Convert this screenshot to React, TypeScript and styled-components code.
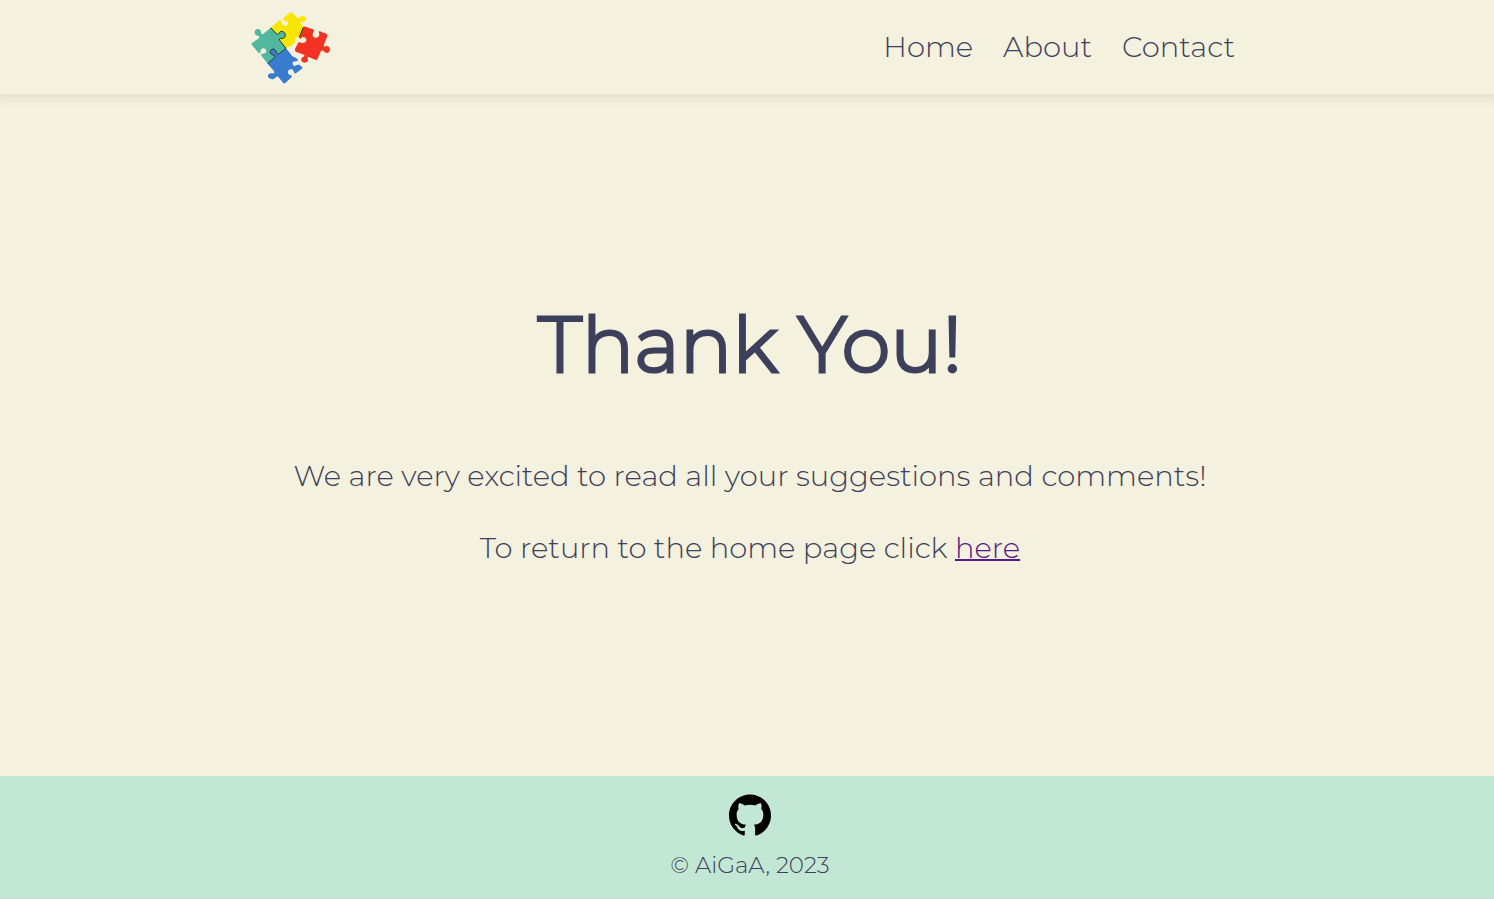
import React from "react";
import styled, { createGlobalStyle } from "styled-components";
import { SiGithub } from "react-icons/si";

const GlobalStyle = createGlobalStyle`
  * { box-sizing: border-box; }
  body {
    margin: 0;
    background: #f4f1de;
    color: #3d405b;
    font-family: Montserrat, Inter, sans-serif;
    font-weight: 300;
  }
`;

const Page = styled.div`
  min-height: 100vh;
  display: flex;
  flex-direction: column;
`;

const Header = styled.header`
  display: flex;
  align-items: center;
  justify-content: space-between;
  height: 94px;
  padding: 0 259px 0 245px;
  box-shadow: 0 0 10px 4px rgba(0, 0, 0, 0.08);
`;

const LogoLink = styled.a`
  display: block;
  height: 85px;
`;

const Nav = styled.nav`
  display: flex;
  gap: 30px;
`;

const NavLink = styled.a`
  color: inherit;
  font-size: 29px;
  line-height: 40px;
  text-decoration: none;
`;

const Main = styled.main`
  flex: 1;
  display: flex;
  flex-direction: column;
  align-items: center;
  justify-content: center;
  padding: 0 0 10px 6px;
  text-align: center;
`;

const Title = styled.h1`
  margin: 0 0 64px;
  font-size: 78px;
  font-weight: 300;
  line-height: 100px;
  -webkit-text-stroke: 3px currentColor;
`;

const Message = styled.p`
  margin: 0 0 36px;
  font-size: 29px;
  line-height: 36px;

  &:last-child { margin-bottom: 0; }
`;

const HomeLink = styled.a`
  color: #551a8b;
  text-decoration-thickness: 2px;
`;

const Footer = styled.footer`
  display: flex;
  flex-direction: column;
  align-items: center;
  gap: 15px;
  padding: 18px 0 19px 6px;
  background: #c2e7d4;
  border-bottom: 1px solid #cdd8d2;
`;

const GithubLink = styled.a`
  display: block;
  height: 42px;
  color: #000;
`;

const Copyright = styled.p`
  margin: 0;
  font-size: 23px;
  line-height: 28px;
`;

const Logo = () => (
  <svg width="92" height="85" viewBox="0 0 276 255" aria-hidden="true">
    <path
      fill="#f8e500"
      d="M78 68 L103 46 C108 43 109 48 110 52 C112 64 126 65 129 57 C131 51 127 47 121 48 C114 47 112 42 116 38 L133 24 Q138 20 143 24 L157 38 C162 42 164 40 164 37 C168 31 179 32 183 39 C186 46 179 52 172 50 C165 49 166 54 170 59 L176 67 L166 92 C163 99 160 97 156 96 C149 99 147 105 152 111 C146 116 137 125 122 130 Z"
    />
    <path
      fill="#f23222"
      d="M175 67 Q178 63 184 66 L204 73 C209 75 207 80 204 84 C201 91 205 98 212 98 C220 99 225 92 222 85 C220 79 223 78 228 80 L244 86 Q249 88 247 94 L237 118 C235 124 238 127 242 124 C248 121 256 127 255 135 C253 144 244 146 239 141 C234 135 229 135 227 140 L218 161 Q216 166 210 164 L193 157 C187 154 186 158 189 163 C190 171 182 175 174 172 C167 168 167 159 174 156 C181 153 180 150 173 148 L154 141 Q148 138 150 132 L158 116 C161 110 164 111 169 113 C176 116 185 111 184 104 C183 96 174 93 169 99 C165 104 161 101 164 95 Z"
    />
    <path
      fill="#52b79f"
      d="M77 68 L92 84 C98 91 101 87 103 83 C108 76 120 80 121 89 C122 97 114 103 107 100 C103 100 101 103 106 109 L123 130 L106 143 C100 148 96 149 94 142 C93 132 81 129 77 136 C73 143 79 149 85 150 C91 151 91 155 86 160 L68 176 L50 153 C46 149 51 145 56 146 C64 145 66 137 61 132 C55 127 46 131 47 139 C46 145 43 147 39 142 L21 120 Q18 116 22 113 L40 101 C46 97 43 93 38 92 C30 91 26 83 31 76 C38 68 48 73 48 82 C48 88 52 91 58 84 Z"
    />
    <path
      fill="#397cce"
      d="M123 130 L142 153 C147 159 143 165 145 169 C141 175 143 183 150 183 C155 181 158 177 162 179 L171 185 Q175 188 170 192 L154 204 C149 208 147 204 146 199 C144 191 131 191 129 200 C128 207 133 210 138 211 C143 212 141 216 137 219 L121 234 Q117 237 114 233 L101 217 C97 212 93 215 91 219 C84 225 74 223 69 215 C67 207 75 203 82 205 C89 206 90 201 86 197 L68 176 L86 160 C91 155 91 151 85 150 C79 149 73 143 77 136 C81 129 93 132 94 142 C96 149 100 148 106 143 Z M142 153 C147 158 156 157 159 165 C158 170 150 168 145 171 Z"
    />
    <path
      fill="none"
      stroke="#17332d"
      strokeWidth="3"
      d="M77 68 L92 84 C98 91 101 87 103 83 C108 76 120 80 121 89 C122 97 114 103 107 100 C103 100 101 103 106 109 L123 130 L106 143 C100 148 96 149 94 142 C93 132 81 129 77 136 C73 143 79 149 85 150 C91 151 91 155 86 160 L68 176 M175 67 L163 96"
    />
  </svg>
);

export default function App() {
  return (
    <Page>
      <GlobalStyle />
      <Header>
        <LogoLink href="#" aria-label="AiGaA home">
          <Logo />
        </LogoLink>
        <Nav>
          <NavLink href="#">Home</NavLink>
          <NavLink href="#about">About</NavLink>
          <NavLink href="#contact">Contact</NavLink>
        </Nav>
      </Header>
      <Main>
        <Title>Thank You!</Title>
        <Message>We are very excited to read all your suggestions and comments!</Message>
        <Message>
          To return to the home page click <HomeLink href="#">here</HomeLink>
        </Message>
      </Main>
      <Footer>
        <GithubLink href="#github" aria-label="GitHub">
          <SiGithub size={42} />
        </GithubLink>
        <Copyright>© AiGaA, 2023</Copyright>
      </Footer>
    </Page>
  );
}
